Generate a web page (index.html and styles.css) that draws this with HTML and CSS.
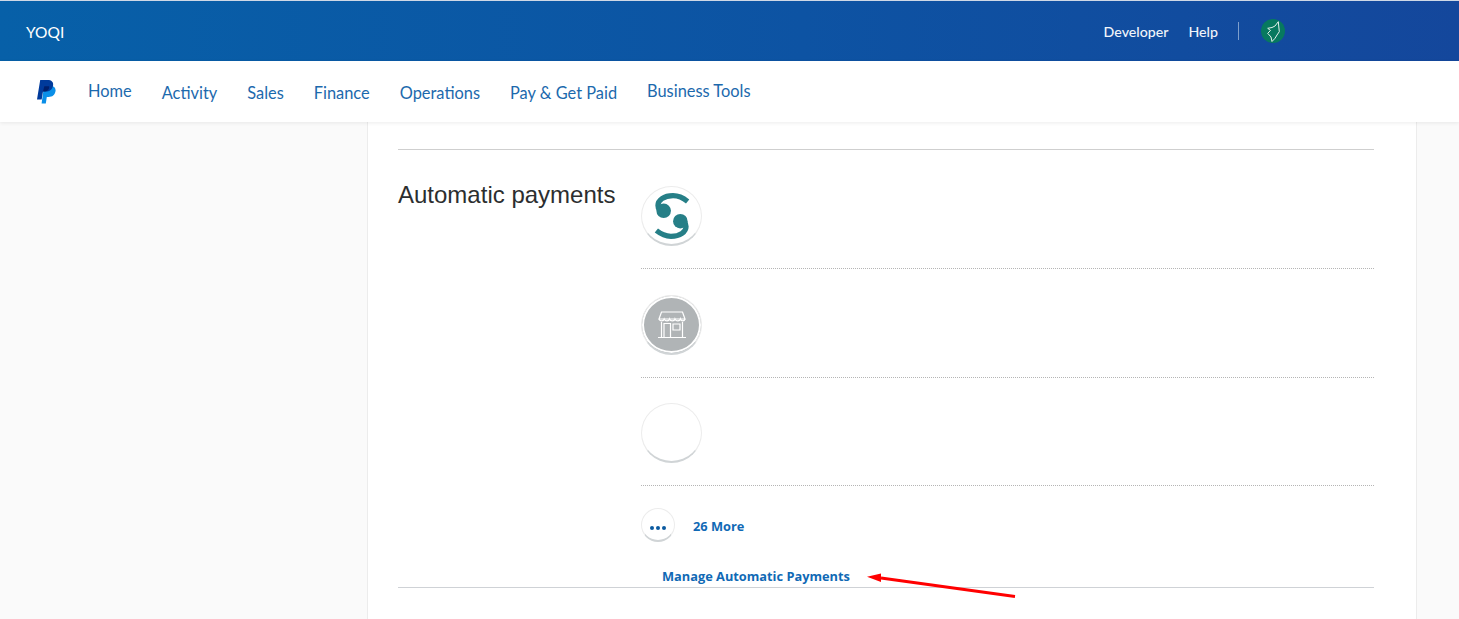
FILE: index.html
```html
<!DOCTYPE html>
<html lang="en">
<head>
    <meta charset="UTF-8">
    <meta name="viewport" content="width=device-width, initial-scale=1.0">
    <title>Automatic payments</title>
    <link rel="stylesheet" href="styles.css">
</head>
<body>
    <!-- Top bar -->
    <header class="top-bar">
        <span class="account-name">YOQI</span>
        <div class="top-links">
            <a href="#">Developer</a>
            <a href="#">Help</a>
            <span class="top-divider"></span>
            <span class="avatar">
                <svg width="24" height="24" viewBox="0 0 24 24" fill="none" stroke="#e4f1ec" stroke-width="1" stroke-linejoin="round">
                    <path d="M17.300 2.700L18.300 12.700 16 16 14 19.300 11 22.500 10 18 6.700 14.300 9.500 11.500 6.700 9.300 11 8.500 14 7z"/>
                </svg>
            </span>
        </div>
    </header>

    <!-- Main navigation -->
    <nav class="main-nav">
        <svg class="pp-logo" width="20" height="24" viewBox="0 0 20 24">
            <path fill="#0a8fe8" d="M8 6h6.500c3.600 0 5.600 2 5 5.300-.7 3.700-3.200 5.700-6.800 5.700h-1.900l-1 6.400H5.600z"/>
            <path fill="#003a9b" d="M4.200 0h7.300c4 0 6.200 2 5.600 5.400-.7 3.900-3.500 6.200-7.500 6.200H7l-1.300 7.900H1z"/>
            <path fill="#001f6b" d="M8.300 6.300h4.900c.3 3.200-1.900 5.300-5.200 5.300H7z"/>
        </svg>
        <a class="nav-item nav-raised" href="#">Home</a>
        <a class="nav-item" href="#">Activity</a>
        <a class="nav-item" href="#">Sales</a>
        <a class="nav-item" href="#">Finance</a>
        <a class="nav-item" href="#">Operations</a>
        <a class="nav-item" href="#">Pay &amp; Get Paid</a>
        <a class="nav-item nav-raised" href="#">Business Tools</a>
    </nav>

    <div class="page">
        <main class="content">
            <section class="payments">
                <h2>Automatic payments</h2>
                <div class="merchant-list">
                    <div class="merchant merchant-first">
                        <span class="merchant-icon">
                            <svg width="44" height="50" viewBox="0 0 42 48" fill="none" stroke="#267f87" stroke-width="5">
                                <path d="M36 10C31 6 27 4.500 22 4.500 13 4.500 7.500 9 7.500 14 7.500 17 9 19 13 20"/>
                                <circle cx="13" cy="19" r="7" fill="#267f87" stroke="none"/>
                                <path d="M6 38C11 42 15 43.500 20 43.500 29 43.500 34.500 39 34.500 34 34.500 31 33 29 29 28"/>
                                <circle cx="29" cy="29" r="7" fill="#267f87" stroke="none"/>
                            </svg>
                        </span>
                    </div>
                    <div class="merchant">
                        <span class="merchant-icon merchant-store">
                            <svg width="28" height="28" viewBox="0 0 28 28" fill="none" stroke="#fff" stroke-width="1.200">
                                <path d="M3.500 1h21l2.500 7H1z"/>
                                <path d="M1 8c1 2.500 4.500 2.500 5.200 0 1 2.500 4.800 2.500 5.400 0 1 2.500 4.800 2.500 5.400 0 1 2.500 4.800 2.500 5.400 0 .8 2.500 4 2.500 4.600 0"/>
                                <path d="M3.500 11v15M24.500 11v15M0 26.500h28M6 26V12.500h6.500V26M15 13h7v6h-7z"/>
                            </svg>
                        </span>
                    </div>
                    <div class="merchant">
                        <span class="merchant-icon"></span>
                    </div>
                    <a class="more-row" href="#">
                        <span class="more-icon"><i></i><i></i><i></i></span>
                        <span class="more-label">26 More</span>
                    </a>
                </div>
            </section>
            <div class="manage-row">
                <a class="manage-link" href="#">Manage Automatic Payments</a>
            </div>
        </main>
    </div>

    <!-- Red annotation arrow -->
    <svg class="arrow" width="150" height="30" viewBox="0 0 150 30">
        <path d="M148 24.500L14 6" stroke="#f00" stroke-width="3" fill="none"/>
        <path d="M0 4.700L14 1.500 14 10z" fill="#f00"/>
    </svg>
</body>
</html>
```

FILE: styles.css
```css
* {
    box-sizing: border-box;
}

html, body {
    height: 100%;
}

body {
    margin: 0;
    font-family: "Liberation Sans", Arial, sans-serif;
    background-color: #fafafa;
    overflow: hidden;
    position: relative;
}

a {
    text-decoration: none;
}

.top-bar {
    height: 61px;
    border-top: 1px solid #cfd8e6;
    background: linear-gradient(90deg, #0760a8 0%, #0d53a3 55%, #14479c 100%);
    display: flex;
    align-items: center;
    justify-content: space-between;
    padding: 0 174px 0 26px;
    color: #fff;
}

.account-name {
    font-family: Lato, sans-serif;
    font-size: 15.500px;
    margin-top: 2px;
}

.top-links {
    display: flex;
    align-items: center;
}

.top-links a {
    font-family: Lato, sans-serif;
    font-size: 14.200px;
    font-weight: 500;
    color: #f0f4fa;
    margin-right: 20px;
}

.top-divider {
    width: 1px;
    height: 18px;
    background-color: #7d9fcc;
    margin-right: 22px;
}

.avatar {
    width: 24px;
    height: 24px;
    border-radius: 50%;
    background-color: #07795f;
    display: flex;
}

.main-nav {
    height: 61px;
    background-color: #fff;
    box-shadow: 0 1px 4px rgba(0, 0, 0, 0.08);
    display: flex;
    align-items: center;
    padding-left: 36px;
    position: relative;
}

.pp-logo {
    margin-right: 32px;
    margin-top: 1px;
}

.nav-item {
    font-family: Lato, sans-serif;
    font-size: 16.400px;
    color: #1c69ad;
    margin-right: 30px;
    padding-top: 1px;
}

.nav-raised {
    padding-top: 0;
    padding-bottom: 3px;
}

.page {
    padding-left: 367px;
    padding-right: 42px;
}

.content {
    height: 497px;
    background-color: #fff;
    border-left: 1px solid #ececec;
    border-right: 1px solid #ececec;
    padding: 27px 42px 0 30px;
}

.payments {
    display: grid;
    grid-template-columns: 243px 1fr;
    border-top: 1px solid #cfcfcf;
    padding-top: 30px;
}

.payments h2 {
    margin: 0;
    font-size: 24px;
    font-weight: 400;
    color: #2c2e2f;
    line-height: 30px;
}

.merchant {
    height: 109px;
    padding-top: 26px;
    border-bottom: 1px dotted #b5b5b5;
}

.merchant-first {
    height: 89px;
    padding-top: 6px;
}

.merchant:nth-child(3) {
    height: 108px;
    padding-top: 25px;
}

.merchant-icon {
    width: 61px;
    height: 60px;
    border: 1px solid #ececec;
    border-bottom: 2px solid #d0d4d6;
    border-radius: 50%;
    background-color: #fff;
    display: flex;
    align-items: center;
    justify-content: center;
}

.merchant-store {
    background-color: #b0b4b6;
    box-shadow: inset 0 0 0 2px #fff;
}

.more-row {
    display: flex;
    align-items: center;
    height: 34px;
    margin-top: 22px;
    font-family: "Open Sans", sans-serif;
    font-size: 12.800px;
    font-weight: 700;
    color: #1069b5;
}

.more-label {
    margin-top: 2px;
}

.more-icon {
    width: 34px;
    height: 34px;
    border: 1px solid #ececec;
    border-bottom: 2px solid #d0d4d6;
    border-radius: 50%;
    display: flex;
    align-items: center;
    justify-content: center;
    gap: 2px;
    margin-right: 18px;
}

.more-icon i {
    width: 4px;
    height: 4px;
    border-radius: 50%;
    background-color: #0b5aa0;
    margin-top: 6px;
}

.manage-row {
    border-bottom: 1px solid #cfd2d6;
    padding: 1px 0 0 264px;
    margin-top: 24px;
    height: 22px;
}

.manage-link {
    font-family: "Open Sans", sans-serif;
    font-size: 12.800px;
    font-weight: 700;
    color: #1069b5;
}

.arrow {
    position: absolute;
    left: 867px;
    top: 572px;
}
```
